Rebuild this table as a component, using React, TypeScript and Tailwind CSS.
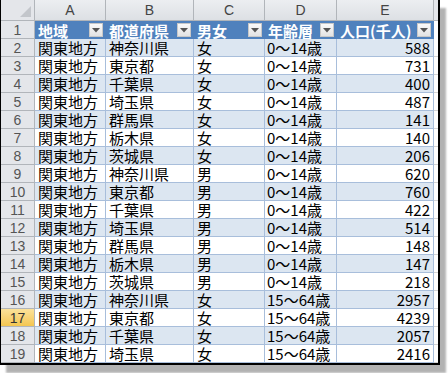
import React from 'react';

const font = { fontFamily: '"Noto Sans CJK JP", "Noto Sans", sans-serif' };

const cols = ['A', 'B', 'C', 'D', 'E'];
const widths = ['w-[71px]', 'w-[88px]', 'w-[71px]', 'w-[72px]', 'w-[97px]'];
const heads = ['地域', '都道府県', '男女', '年齢層', '人口(千人)'];

const rows: [string, string, string, number][] = [
  ['神奈川県', '女', '0～14歳', 588],
  ['東京都', '女', '0～14歳', 731],
  ['千葉県', '女', '0～14歳', 400],
  ['埼玉県', '女', '0～14歳', 487],
  ['群馬県', '女', '0～14歳', 141],
  ['栃木県', '女', '0～14歳', 140],
  ['茨城県', '女', '0～14歳', 206],
  ['神奈川県', '男', '0～14歳', 620],
  ['東京都', '男', '0～14歳', 760],
  ['千葉県', '男', '0～14歳', 422],
  ['埼玉県', '男', '0～14歳', 514],
  ['群馬県', '男', '0～14歳', 148],
  ['栃木県', '男', '0～14歳', 147],
  ['茨城県', '男', '0～14歳', 218],
  ['神奈川県', '女', '15～64歳', 2957],
  ['東京都', '女', '15～64歳', 4239],
  ['千葉県', '女', '15～64歳', 2057],
  ['埼玉県', '女', '15～64歳', 2416],
];

const RowNum = ({ n, active }: { n: number; active?: boolean }) => (
  <div
    className={`w-[34px] shrink-0 flex items-center justify-center border-r border-b border-[#b1b5ba] text-[14px] leading-none ${
      active ? 'bg-gradient-to-b from-[#fbe29a] to-[#f4c64f] text-[#333]' : 'bg-[#e4e6ea] text-[#555]'
    }`}
    style={{ fontFamily: '"Liberation Sans", Arial, sans-serif' }}
  >
    {n}
  </div>
);

const Dropdown = () => (
  <div className="absolute right-[2px] top-[2px] w-[14px] h-[14px] bg-gradient-to-b from-[#fafafa] to-[#e3e3e3] border border-[#c8c8c8] flex items-center justify-center">
    <svg width="8" height="5" viewBox="0 0 8 5">
      <path d="M0 0h8L4 4.5z" fill="#555" />
    </svg>
  </div>
);

export default function App() {
  return (
    <div className="w-[448px] h-[373px] bg-white" style={font}>
      <div className="w-[440px] border-l border-r-2 border-b-2 border-black bg-[#e4e6ea] shadow-[6px_8px_2px_rgba(0,0,0,0.3)] overflow-hidden">
        {/* column letters */}
        <div className="flex h-[21px]">
          <div className="w-[34px] shrink-0 relative border-r border-b border-[#b1b5ba] bg-[#e4e6ea]">
            <svg className="absolute right-[3px] bottom-[3px]" width="11" height="11" viewBox="0 0 11 11">
              <path d="M11 0v11H0z" fill="#c3c6cb" />
            </svg>
          </div>
          {cols.map((c, i) => (
            <div
              key={c}
              className={`${widths[i]} shrink-0 flex items-center justify-center border-r border-b border-[#b1b5ba] bg-gradient-to-b from-[#eceef1] to-[#dde0e4] text-[14px] leading-none text-[#444]`}
              style={{ fontFamily: '"Liberation Sans", Arial, sans-serif' }}
            >
              {c}
            </div>
          ))}
          <div className="flex-1 border-b border-[#b1b5ba] bg-[#e4e6ea]" />
        </div>

        {/* table header */}
        <div className="flex h-[18px]">
          <RowNum n={1} />
          {heads.map((h, i) => (
            <div
              key={h}
              className={`${widths[i]} shrink-0 relative flex items-center bg-[#4f81bd] text-white font-bold text-[15px] leading-none pl-[3px] border-r border-[#4f81bd] whitespace-nowrap`}
            >
              {h}
              <Dropdown />
            </div>
          ))}
          <div className="flex-1 bg-white" />
        </div>

        {rows.map((r, idx) => {
          const n = idx + 2;
          const band = n % 2 === 0 ? 'bg-[#dce6f1]' : 'bg-white';
          const cell = `shrink-0 flex items-center ${band} border-r border-b border-[#a8bedb] text-[15px] leading-none text-black whitespace-nowrap`;
          return (
            <div key={n} className="flex h-[18px]">
              <RowNum n={n} active={n === 17} />
              <div className={`${widths[0]} ${cell} pl-[3px]`}>関東地方</div>
              <div className={`${widths[1]} ${cell} pl-[3px]`}>{r[0]}</div>
              <div className={`${widths[2]} ${cell} pl-[3px]`}>{r[1]}</div>
              <div className={`${widths[3]} ${cell} pl-[2px]`}>{r[2]}</div>
              <div className={`${widths[4]} ${cell} justify-end pr-[3px]`}>{r[3]}</div>
              <div className="flex-1 bg-white border-b border-[#d4d4d4]" />
            </div>
          );
        })}
      </div>
    </div>
  );
}
